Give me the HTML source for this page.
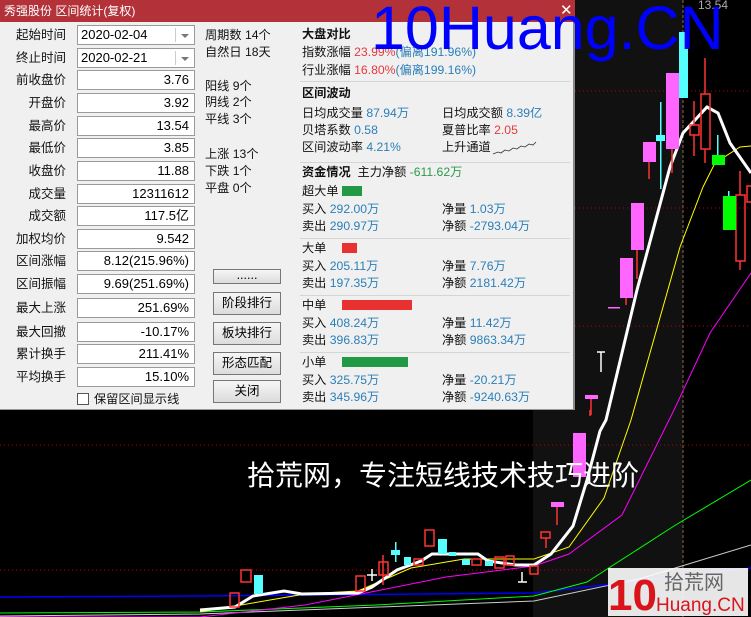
<!DOCTYPE html>
<html><head><meta charset="utf-8"><style>
*{margin:0;padding:0;box-sizing:border-box}
body{width:751px;height:617px;background:#000;position:relative;overflow:hidden;font-family:"Liberation Sans","Noto Sans CJK SC",sans-serif;font-size:12px}
svg.chart{position:absolute;left:0;top:0}
#dlg{position:absolute;left:0;top:0;width:575px;height:410px;background:#f0f0f0;border-right:2px solid #888;border-bottom:1px solid #999}
#title{position:absolute;left:0;top:0;width:575px;height:22px;background:#b3323a;color:#fff;font-size:12px;line-height:22px;padding-left:4px}
.a{position:absolute;white-space:nowrap;color:#111;line-height:16px}
.lab{position:absolute;width:66px;text-align:right;font-size:12.5px;color:#111;line-height:16px}
.box{position:absolute;left:77px;width:118px;height:20px;background:#fff;border:1px solid #9a9a9a;text-align:right;padding-right:5px;font-size:13px;line-height:18px}
.dd{text-align:left;padding-left:3px}
.dd:after{content:"";position:absolute;right:5px;top:8px;border-left:4px solid transparent;border-right:4px solid transparent;border-top:4px solid #777}
.dd:before{content:"";position:absolute;right:18px;top:2px;height:14px;border-left:1px solid #ccc}
.btn{position:absolute;left:213px;width:68px;height:23px;background:linear-gradient(#f6f6f6,#dcdcdc);border:1px solid #777;text-align:center;font-size:12.5px;line-height:21px}
.m{font-size:12.2px}
.b{color:#2a7fb8}.r{color:#e6393c}.g{color:#2a9a4a}
.sep{position:absolute;left:300px;width:270px;height:1px;background:#d5d5d5}
</style></head><body>
<svg class="chart" width="751" height="617" viewBox="0 0 751 617">
<rect x="533" y="0" width="150" height="617" fill="#111"/>
<line x1="683" y1="0" x2="683" y2="617" stroke="#8a6a4a" stroke-dasharray="3,2"/>
<g stroke="#b00" stroke-dasharray="1,3">
<line x1="575" y1="91" x2="751" y2="91"/><line x1="575" y1="208" x2="751" y2="208"/><line x1="575" y1="326" x2="751" y2="326"/>
<line x1="0" y1="445" x2="751" y2="445"/><line x1="0" y1="570" x2="751" y2="570"/></g>
<g fill="none">
<polyline stroke="#ccc" points="0,616 200,614 534,601 639,579 751,545"/>
<polyline stroke="#00f" stroke-width="1.5" points="0,597 200,596 534,593 751,568"/>
<polyline stroke="#0f0" points="0,613 200,612 376,605 534,596 587,582 674,526 751,480"/>
<polyline stroke="#f0f" points="0,617 200,617 305,605 376,591 446,577 534,566 569,554 622,515 674,410 710,333 751,273"/>
<polyline stroke="#ff0" points="200,612 305,594 358,591 411,568 464,559 534,559 569,547 604,498 631,420 680,247 703,187 715,163 740,147 751,146"/>
<polyline stroke="#fff" stroke-width="3" points="200,610 235,607 253,596 284,591 302,594 358,593 372,587 397,570 421,561 432,554 478,554 488,561 516,565 534,565 551,554 573,526 587,480 600,431 606,420 637,290 670,167 683,133 707,107 718,113 730,143 751,173"/>
</g>
<g stroke="#f33" stroke-width="1.5" fill="none">
<rect x="241" y="570" width="10" height="12"/><rect x="230" y="593" width="9" height="14"/><rect x="356" y="576" width="9" height="15"/>
<rect x="379" y="562" width="9" height="13"/><rect x="414" y="559" width="9" height="6"/><rect x="425" y="530" width="9" height="16"/>
<rect x="472" y="559" width="9" height="6"/><rect x="495" y="557" width="9" height="11"/><rect x="506" y="556" width="8" height="9"/>
<rect x="530" y="566" width="8" height="8"/><rect x="541" y="532" width="9" height="6"/>
<rect x="690" y="125" width="9" height="10"/><rect x="701" y="94" width="9" height="55"/><rect x="736" y="195" width="9" height="66"/><rect x="747" y="186" width="9" height="16"/>
<line x1="383" y1="555" x2="383" y2="585"/><line x1="546" y1="538" x2="546" y2="548"/><line x1="557" y1="507" x2="557" y2="525"/>
<line x1="591" y1="399" x2="591" y2="415"/><line x1="626" y1="298" x2="626" y2="305"/><line x1="637" y1="250" x2="637" y2="279"/><line x1="649" y1="162" x2="649" y2="179"/><line x1="672" y1="149" x2="672" y2="173"/>
<line x1="694" y1="101" x2="694" y2="125"/><line x1="694" y1="135" x2="694" y2="156"/><line x1="705" y1="58" x2="705" y2="94"/><line x1="705" y1="149" x2="705" y2="163"/><line x1="740" y1="171" x2="740" y2="195"/><line x1="740" y1="261" x2="740" y2="270"/><line x1="590" y1="410" x2="590" y2="416"/>
</g>
<g fill="#5ff">
<rect x="254" y="575" width="9" height="19"/><rect x="391" y="550" width="9" height="5"/><rect x="395" y="542" width="1.5" height="20"/><rect x="404" y="557" width="7" height="8"/>
<rect x="438" y="539" width="9" height="15"/><rect x="449" y="552" width="7" height="4"/><rect x="462" y="559" width="8" height="6"/><rect x="485" y="561" width="8" height="5"/>
<rect x="660" y="102" width="1.5" height="87"/><rect x="656" y="135" width="9" height="6"/><rect x="679" y="32" width="9" height="66"/><rect x="717" y="135" width="1.5" height="20"/><rect x="728" y="191" width="1.5" height="6"/>
</g>
<g fill="#0f0"><rect x="712" y="155" width="13" height="10"/><rect x="723" y="196" width="13" height="34"/></g>
<g fill="#f6f">
<rect x="551" y="502" width="13" height="5"/><rect x="573" y="433" width="13" height="44"/><rect x="585" y="395" width="13" height="4"/><rect x="608" y="307" width="12" height="1.5"/>
<rect x="620" y="258" width="13" height="40"/><rect x="631" y="203" width="13" height="47"/><rect x="643" y="142" width="13" height="20"/><rect x="666" y="73" width="13" height="76"/>
</g>
<g stroke="#fff" stroke-width="1.5"><line x1="372" y1="569" x2="372" y2="581"/><line x1="367" y1="575" x2="377" y2="575"/>
<line x1="518" y1="582" x2="527" y2="582"/><line x1="522" y1="572" x2="522" y2="582"/><line x1="597" y1="352" x2="605" y2="352"/><line x1="601" y1="352" x2="601" y2="372"/></g>
<text x="698" y="9" fill="#aaa" font-size="12" font-family="Liberation Sans">13.54</text>
<text x="247" y="485" fill="#fff" font-size="28" font-family="Liberation Sans,Noto Sans CJK SC,sans-serif">拾荒网，专注短线技术技巧进阶</text>
<rect x="608" y="568" width="140" height="48" fill="#fff" opacity="0.9"/>
<text x="608" y="610" fill="#d9141b" font-size="44" font-weight="bold" font-family="Liberation Sans">10</text>
<text x="664" y="589" fill="#666" font-size="20" font-family="Noto Sans CJK SC,sans-serif">拾荒网</text>
<text x="656" y="611" fill="#d9141b" font-size="19" font-family="Liberation Sans">Huang.CN</text>
</svg>
<div id="dlg">
<div id="title">秀强股份 区间统计(复权)</div>
<div class="a" style="left:560px;top:3px;color:#fff;font-size:15px">✕</div>
<div class="lab" style="top:27px">起始时间</div><div class="box dd" style="top:25px">2020-02-04</div>
<div class="lab" style="top:50px">终止时间</div><div class="box dd" style="top:48px">2020-02-21</div>
<div class="lab" style="top:72px">前收盘价</div><div class="box" style="top:70px">3.76</div>
<div class="lab" style="top:95px">开盘价</div><div class="box" style="top:93px">3.92</div>
<div class="lab" style="top:118px">最高价</div><div class="box" style="top:116px">13.54</div>
<div class="lab" style="top:140px">最低价</div><div class="box" style="top:138px">3.85</div>
<div class="lab" style="top:163px">收盘价</div><div class="box" style="top:161px">11.88</div>
<div class="lab" style="top:186px">成交量</div><div class="box" style="top:184px">12311612</div>
<div class="lab" style="top:208px">成交额</div><div class="box" style="top:206px">117.5亿</div>
<div class="lab" style="top:231px">加权均价</div><div class="box" style="top:229px">9.542</div>
<div class="lab" style="top:253px">区间涨幅</div><div class="box" style="top:251px">8.12(215.96%)</div>
<div class="lab" style="top:276px">区间振幅</div><div class="box" style="top:274px">9.69(251.69%)</div>
<div class="lab" style="top:300px">最大上涨</div><div class="box" style="top:298px">251.69%</div>
<div class="lab" style="top:324px">最大回撤</div><div class="box" style="top:322px">-10.17%</div>
<div class="lab" style="top:346px">累计换手</div><div class="box" style="top:344px">211.41%</div>
<div class="lab" style="top:369px">平均换手</div><div class="box" style="top:367px">15.10%</div>
<div class="a" style="left:77px;top:393px;width:12px;height:12px;background:#fff;border:1px solid #555"></div>
<div class="a m" style="left:94px;top:391px">保留区间显示线</div>
<div class="btn" style="top:269px;height:15px;line-height:10px">......</div>
<div class="btn" style="top:292px">阶段排行</div>
<div class="btn" style="top:322px">板块排行</div>
<div class="btn" style="top:352px">形态匹配</div>
<div class="btn" style="top:380px">关闭</div>
<div class="a m" style="left:205px;top:27px">周期数 14个</div>
<div class="a m" style="left:205px;top:44px">自然日 18天</div>
<div class="a m" style="left:205px;top:78px">阳线 9个</div>
<div class="a m" style="left:205px;top:94px">阴线 2个</div>
<div class="a m" style="left:205px;top:111px">平线 3个</div>
<div class="a m" style="left:205px;top:146px">上涨 13个</div>
<div class="a m" style="left:205px;top:163px">下跌 1个</div>
<div class="a m" style="left:205px;top:180px">平盘 0个</div>
<div class="a m" style="left:302px;top:26px;font-weight:bold">大盘对比</div>
<div class="a m" style="left:302px;top:44px">指数涨幅 <span class="r">23.99%</span><span class="b">(偏离191.96%)</span></div>
<div class="a m" style="left:302px;top:62px">行业涨幅 <span class="r">16.80%</span><span class="b">(偏离199.16%)</span></div>
<div class="sep" style="top:81px"></div>
<div class="a m" style="left:302px;top:85px;font-weight:bold">区间波动</div>
<div class="a m" style="left:302px;top:105px">日均成交量 <span class="b">87.94万</span></div>
<div class="a m" style="left:442px;top:105px">日均成交额 <span class="b">8.39亿</span></div>
<div class="a m" style="left:302px;top:122px">贝塔系数 <span class="b">0.58</span></div>
<div class="a m" style="left:442px;top:122px">夏普比率 <span class="r">2.05</span></div>
<div class="a m" style="left:302px;top:139px">区间波动率 <span class="b">4.21%</span></div>
<div class="a m" style="left:442px;top:139px">上升通道</div>
<svg class="a" style="left:492px;top:140px" width="45" height="16"><polyline fill="none" stroke="#333" stroke-width="0.8" points="1,14 6,12 9,13 13,10 17,11 21,8 25,9 29,6 33,7 37,4 41,5 44,2"/></svg>
<div class="sep" style="top:162px"></div>
<div class="a m" style="left:302px;top:164px"><b>资金情况</b>&nbsp; 主力净额 <span class="g">-611.62万</span></div>
<div class="a m" style="left:302px;top:183px">超大单</div><div class="a" style="left:342px;top:186px;width:20px;height:10px;background:#229944"></div>
<div class="a m" style="left:302px;top:201px">买入 <span class="b">292.00万</span></div><div class="a m" style="left:442px;top:201px">净量 <span class="b">1.03万</span></div>
<div class="a m" style="left:302px;top:218px">卖出 <span class="b">290.97万</span></div><div class="a m" style="left:442px;top:218px">净额 <span class="b">-2793.04万</span></div>
<div class="sep" style="top:238px"></div>
<div class="a m" style="left:302px;top:240px">大单</div><div class="a" style="left:342px;top:243px;width:15px;height:10px;background:#e83232"></div>
<div class="a m" style="left:302px;top:258px">买入 <span class="b">205.11万</span></div><div class="a m" style="left:442px;top:258px">净量 <span class="b">7.76万</span></div>
<div class="a m" style="left:302px;top:275px">卖出 <span class="b">197.35万</span></div><div class="a m" style="left:442px;top:275px">净额 <span class="b">2181.42万</span></div>
<div class="sep" style="top:295px"></div>
<div class="a m" style="left:302px;top:297px">中单</div><div class="a" style="left:342px;top:300px;width:70px;height:10px;background:#e83232"></div>
<div class="a m" style="left:302px;top:315px">买入 <span class="b">408.24万</span></div><div class="a m" style="left:442px;top:315px">净量 <span class="b">11.42万</span></div>
<div class="a m" style="left:302px;top:332px">卖出 <span class="b">396.83万</span></div><div class="a m" style="left:442px;top:332px">净额 <span class="b">9863.34万</span></div>
<div class="sep" style="top:352px"></div>
<div class="a m" style="left:302px;top:354px">小单</div><div class="a" style="left:342px;top:357px;width:66px;height:10px;background:#229944"></div>
<div class="a m" style="left:302px;top:372px">买入 <span class="b">325.75万</span></div><div class="a m" style="left:442px;top:372px">净量 <span class="b">-20.21万</span></div>
<div class="a m" style="left:302px;top:389px">卖出 <span class="b">345.96万</span></div><div class="a m" style="left:442px;top:389px">净额 <span class="b">-9240.63万</span></div>
</div>
<div class="a" style="left:371px;top:-4px;color:#0000ff;font-size:61px;line-height:64px">10Huang.CN</div>
</body></html>
